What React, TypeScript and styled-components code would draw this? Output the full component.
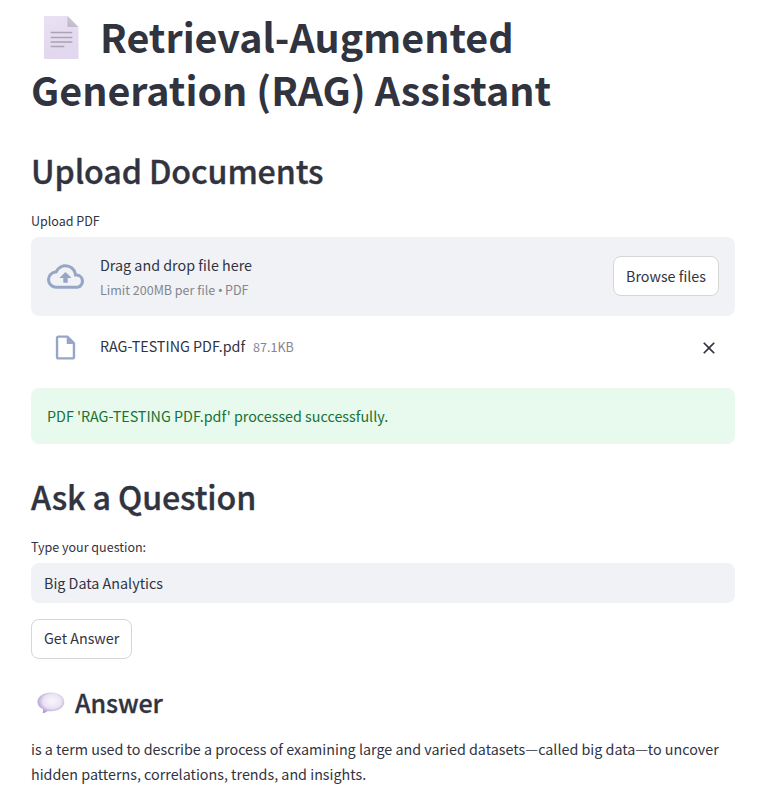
import React from 'react';
import styled, { createGlobalStyle } from 'styled-components';
import { MdClose, MdOutlineCloudUpload, MdOutlineInsertDriveFile } from 'react-icons/md';

const GlobalStyle = createGlobalStyle`
  * { box-sizing: border-box; }
  body {
    margin: 0;
    background: #fff;
    color: #31333f;
    font-family: "Source Sans Pro", "Noto Sans CJK SC", sans-serif;
    font-size: 14.32px;
    line-height: 25px;
  }
`;

const Page = styled.main`
  width: 704px;
  margin-left: 31px;
  padding-top: 9px;
  display: flex;
  flex-direction: column;
  align-items: stretch;
`;

const Title = styled.h1`
  margin: 0;
  font-size: 39.43px;
  line-height: 53px;
  font-weight: 700;
  white-space: nowrap;
`;

const TitleLine = styled.span`
  display: flex;
  align-items: center;
`;

const Section = styled.h2<{ $top: number }>`
  margin: ${(p) => p.$top}px 0 0;
  font-size: 32.2px;
  line-height: 43px;
  font-weight: 500;
  letter-spacing: -0.12px;
  -webkit-text-stroke: 0.35px currentColor;
`;

const Label = styled.label`
  display: block;
  margin-top: 18px;
  height: 27px;
  font-size: 12.53px;
  line-height: 22px;
`;

const Dropzone = styled.section`
  display: flex;
  align-items: center;
  height: 79px;
  padding: 0 16px;
  border-radius: 8px;
  background: #f0f2f6;
`;

const IconSlot = styled.span`
  display: flex;
  justify-content: center;
  width: 37px;
  margin-right: 16px;
  color: #98a6c6;
`;

const DropText = styled.div`
  flex: 1;
`;

const Small = styled.div`
  font-size: 12.53px;
  line-height: 24px;
  color: #84868f;
`;

const Limit = styled(Small)`
  padding-top: 1px;
  line-height: 23px;
`;

const Bullet = styled.span`
  margin-right: -0.5px;
  font-family: "Noto Sans", sans-serif;
  line-height: 1;
`;

const Button = styled.button`
  height: 40px;
  padding: 0 12px 2px;
  border: 1px solid #d6d6d9;
  border-radius: 8px;
  background: #fff;
  color: inherit;
  font: inherit;
  white-space: nowrap;
`;

const BrowseButton = styled(Button)`
  margin-bottom: 1px;
`;

const AnswerButton = styled(Button)`
  width: 101px;
  margin-top: 16px;
  padding-bottom: 4px;
  align-self: flex-start;
`;

const FileRow = styled.div`
  display: flex;
  align-items: center;
  height: 62px;
  padding: 0 16px;
`;

const FileName = styled.span`
  margin-right: 8px;
`;

const FileText = styled.div`
  display: flex;
  align-items: baseline;
  padding-bottom: 3px;
`;

const CloseButton = styled.button`
  display: flex;
  margin: 1px 0 0 auto;
  padding: 0;
  border: 0;
  background: none;
  color: #31333f;
`;

const Alert = styled.div`
  display: flex;
  align-items: center;
  height: 56px;
  margin-top: 10px;
  padding: 0 16px 2px;
  border-radius: 8px;
  background: #e8f9ee;
  color: #177233;
`;

const Input = styled.input`
  height: 40px;
  padding: 0 13px 2px;
  border: 0;
  border-radius: 8px;
  background: #f0f2f6;
  color: inherit;
  font: inherit;
`;

const AnswerTitle = styled.h3`
  display: flex;
  align-items: center;
  margin: 26px 0 0;
  font-size: 25.06px;
  line-height: 34px;
  font-weight: 500;
  letter-spacing: -0.1px;
  -webkit-text-stroke: 0.3px currentColor;
`;

const Answer = styled.p`
  margin: 17px 0 0;
  white-space: nowrap;
`;

const PageEmoji = styled.svg`
  flex: none;
  width: 37px;
  height: 45px;
  margin: 4px 20px 0 12px;
`;

const SpeechEmoji = styled.svg`
  flex: none;
  width: 28px;
  height: 22px;
  margin: 1px 10px 0 6px;
`;

const PageIcon = () => (
  <PageEmoji viewBox="0 0 37 45" aria-hidden="true">
    <defs>
      <linearGradient id="sheet" x1="0" y1="0" x2="0.3" y2="1">
        <stop offset="0" stopColor="#e9e1f3" />
        <stop offset="1" stopColor="#e1d7ee" />
      </linearGradient>
      <linearGradient id="fold" x1="0" y1="1" x2="1" y2="0">
        <stop offset="0" stopColor="#bdb5c5" />
        <stop offset="1" stopColor="#d8d1df" />
      </linearGradient>
    </defs>
    <path d="M2 1h22.5L35.5 12v31a1 1 0 0 1-1 1H2a1 1 0 0 1-1-1V2a1 1 0 0 1 1-1z" fill="url(#sheet)" />
    <path d="M24.5 1 35.5 12h-10a1 1 0 0 1-1-1z" fill="url(#fold)" />
    <path d="M7.7 17.500h21.600M7.700 22.500h21.600M7.700 27h21.600M7.700 31.500h13.600" stroke="#aaa3b2" strokeWidth="1.6" fill="none" />
  </PageEmoji>
);

const SpeechIcon = () => (
  <SpeechEmoji viewBox="0 0 28 22" aria-hidden="true">
    <defs>
      <radialGradient id="bubble" cx="0.55" cy="0.42" r="0.56">
        <stop offset="0" stopColor="#f8f5fb" />
        <stop offset="0.6" stopColor="#ebe4f3" />
        <stop offset="1" stopColor="#b5a0d2" />
      </radialGradient>
    </defs>
    <path d="M14 .5c7.400 0 13.300 4.100 13.300 9.500S21.400 19.300 14 19.300c-1.100 0-2.200-.1-3.200-.3-1.500 1.200-3.200 2-5.200 2.300.5-1.200.6-2.600.3-4C2.600 15.600.5 13 .5 10 .5 4.600 6.600.5 14 .5z" fill="url(#bubble)" />
  </SpeechEmoji>
);

export default function App() {
  return (
    <>
      <GlobalStyle />
      <Page>
        <Title>
          <TitleLine><PageIcon />Retrieval-Augmented</TitleLine>
          <TitleLine>Generation (RAG) Assistant</TitleLine>
        </Title>
        <Section $top={34}>Upload Documents</Section>
        <Label>Upload PDF</Label>
        <Dropzone>
          <IconSlot><MdOutlineCloudUpload size={37} /></IconSlot>
          <DropText>
            <div>Drag and drop file here</div>
            <Limit>Limit 200MB per file <Bullet>•</Bullet> PDF</Limit>
          </DropText>
          <BrowseButton>Browse files</BrowseButton>
        </Dropzone>
        <FileRow>
          <IconSlot><MdOutlineInsertDriveFile size={29} /></IconSlot>
          <FileText>
            <FileName>RAG-TESTING PDF.pdf</FileName>
            <Small>87.1KB</Small>
          </FileText>
          <CloseButton aria-label="Remove file"><MdClose size={20} /></CloseButton>
        </FileRow>
        <Alert>PDF 'RAG-TESTING PDF.pdf' processed successfully.</Alert>
        <Section $top={31}>Ask a Question</Section>
        <Label htmlFor="question">Type your question:</Label>
        <Input id="question" defaultValue="Big Data Analytics" />
        <AnswerButton>Get Answer</AnswerButton>
        <AnswerTitle><SpeechIcon />Answer</AnswerTitle>
        <Answer>
          is a term used to describe a process of examining large and varied datasets—called big data—to uncover
          <br />
          hidden patterns, correlations, trends, and insights.
        </Answer>
      </Page>
    </>
  );
}
